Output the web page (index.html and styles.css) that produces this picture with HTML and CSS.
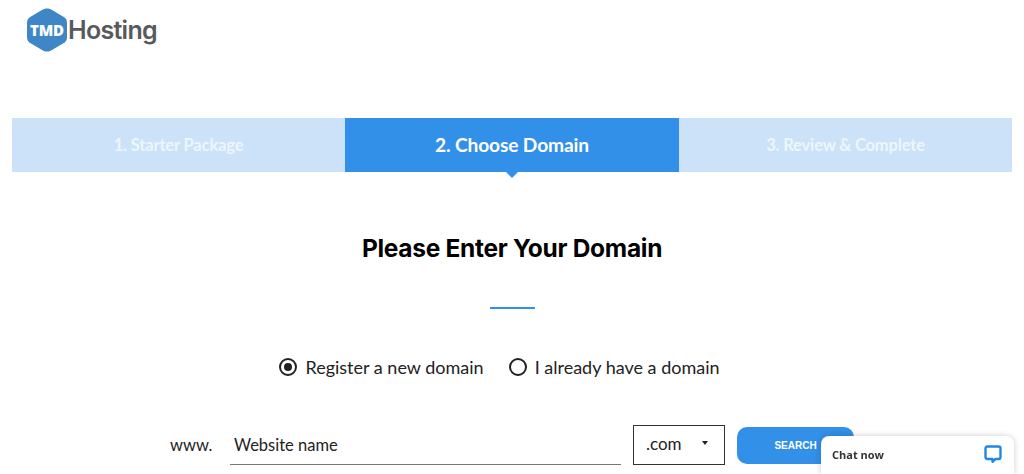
FILE: index.html
```html
<!DOCTYPE html>
<html lang="en">
<head>
    <meta charset="UTF-8">
    <meta name="viewport" content="width=device-width, initial-scale=1.0">
    <title>TMDHosting - Choose Domain</title>
    <link rel="stylesheet" href="styles.css">
</head>
<body>
    <header class="site-header">
        <a class="logo" href="#">
            <svg class="logo-mark" width="42" height="46" viewBox="0 0 42 46">
                <path d="M21 1.5 C23 1.5 24 2 26 3 L37 9.5 C40 11.3 41 13 41 16 V30 C41 33 40 34.7 37 36.5 L26 43 C24 44 23 44.5 21 44.5 C19 44.5 18 44 16 43 L5 36.5 C2 34.7 1 33 1 30 V16 C1 13 2 11.3 5 9.5 L16 3 C18 2 19 1.5 21 1.5 Z" fill="#3f86c6"/>
                <text x="21" y="28.5" text-anchor="middle" class="logo-tmd">TMD</text>
            </svg>
            <span class="logo-name">Hosting</span>
        </a>
    </header>

    <ol class="steps">
        <li class="step">1. Starter Package</li>
        <li class="step step-active">2. Choose Domain</li>
        <li class="step">3. Review &amp; Complete</li>
    </ol>

    <main class="domain">
        <h1>Please Enter Your Domain</h1>
        <div class="divider"></div>

        <div class="radio-row">
            <label class="radio-label"><span class="radio radio-on"></span>Register a new domain</label>
            <label class="radio-label"><span class="radio"></span>I already have a domain</label>
        </div>

        <form class="search-row">
            <span class="www">www.</span>
            <input class="name-input" type="text" placeholder="Website name">
            <div class="tld"><span>.com</span><span class="caret"></span></div>
            <button class="search-btn" type="button">SEARCH</button>
        </form>
    </main>

    <aside class="chat">
        <span class="chat-text">Chat now</span>
        <svg width="18" height="18" viewBox="0 0 18 18">
            <path d="M3.5 1.5 H14.5 C15.8 1.5 16.5 2.2 16.5 3.5 V12 C16.5 13.3 15.8 14 14.5 14 H11.5 L8.5 16.8 V14 H3.5 C2.2 14 1.5 13.3 1.5 12 V3.5 C1.5 2.2 2.2 1.5 3.5 1.5 Z" fill="none" stroke="#1e88e5" stroke-width="2.4" stroke-linejoin="round"/>
        </svg>
    </aside>
</body>
</html>
```

FILE: styles.css
```css
html, body {
    height: 100%;
}

body {
    margin: 0;
    font-family: "Lato", sans-serif;
    color: #222;
    background-color: #fff;
    overflow: hidden;
}

.site-header {
    height: 118px;
    padding-left: 26px;
    box-sizing: border-box;
}

.logo {
    display: inline-flex;
    align-items: center;
    padding-top: 7px;
    text-decoration: none;
}

.logo-mark {
    display: block;
}

.logo-tmd {
    font-family: "Open Sans", sans-serif;
    font-weight: 800;
    font-size: 15px;
    letter-spacing: -0.2px;
    fill: #fff;
}

.logo-name {
    font-family: "Inter", sans-serif;
    font-weight: 600;
    font-size: 25px;
    letter-spacing: -0.7px;
    color: #58595b;
}

.steps {
    display: grid;
    grid-template-columns: 333px 334px 333px;
    list-style: none;
    margin: 0 12px;
    padding: 0;
}

.step {
    height: 54px;
    line-height: 54px;
    text-align: center;
    font-size: 16.5px;
    font-weight: 700;
    letter-spacing: -0.15px;
    color: #eef6fd;
    background-color: #cbe2f8;
    position: relative;
}

.step-active {
    font-size: 19.2px;
    font-weight: 700;
    color: #fff;
    background-color: #3290e8;
}

.step-active::after {
    content: "";
    position: absolute;
    left: 50%;
    bottom: -6px;
    margin-left: -6px;
    border-left: 6px solid transparent;
    border-right: 6px solid transparent;
    border-top: 6px solid #3290e8;
}

.domain {
    display: flex;
    flex-direction: column;
    align-items: center;
}

h1 {
    margin: 60px 0 0;
    font-family: "Inter", sans-serif;
    font-size: 24.5px;
    line-height: 32px;
    font-weight: 700;
    letter-spacing: -0.3px;
    color: #000;
}

.divider {
    width: 45px;
    height: 2px;
    margin-top: 43px;
    background-color: #3290e8;
}

.radio-row {
    display: flex;
    gap: 25px;
    margin-top: 46px;
    padding-right: 25px;
    font-size: 18px;
    line-height: 24px;
}

.radio-label {
    display: flex;
    align-items: center;
    gap: 8px;
}

.radio {
    width: 14px;
    height: 14px;
    border: 2px solid #222;
    border-radius: 50%;
    position: relative;
}

.radio-on::after {
    content: "";
    position: absolute;
    top: 3px;
    left: 3px;
    width: 8px;
    height: 8px;
    border-radius: 50%;
    background-color: #222;
}

.search-row {
    display: flex;
    align-items: center;
    margin-top: 46px;
    height: 40px;
    width: 684px;
}

.www {
    width: 60px;
    font-size: 16.5px;
    margin-top: -1px;
}

.name-input {
    width: 391px;
    height: 40px;
    box-sizing: border-box;
    border: none;
    border-bottom: 1px solid #777;
    padding: 0 4px;
    font-family: "Lato", sans-serif;
    font-size: 16.5px;
    outline: none;
}

.name-input::placeholder {
    color: #222;
    opacity: 1;
}

.tld {
    display: flex;
    align-items: center;
    justify-content: space-between;
    width: 92px;
    height: 40px;
    box-sizing: border-box;
    margin-left: 12px;
    padding: 0 16px 4px 12px;
    border: 1px solid #333;
    font-size: 17px;
}

.caret {
    border-left: 3px solid transparent;
    border-right: 3px solid transparent;
    border-top: 4px solid #222;
}

.search-btn {
    width: 117px;
    height: 37px;
    margin-left: 12px;
    padding: 0;
    border: none;
    border-radius: 10px;
    background-color: #3290e8;
    color: #fff;
    font-family: "Liberation Sans", sans-serif;
    font-size: 10px;
    font-weight: 700;
}

.chat {
    position: fixed;
    right: 10px;
    bottom: 0;
    width: 193px;
    height: 38px;
    box-sizing: border-box;
    display: flex;
    align-items: center;
    justify-content: space-between;
    padding: 0 12px 2px 11px;
    background-color: #fff;
    border-radius: 8px 8px 0 0;
    box-shadow: 0 0 6px rgba(0,0,0,0.2);
}

.chat-text {
    font-family: "Open Sans", sans-serif;
    font-size: 11px;
    font-weight: 700;
    color: #333;
}
```
